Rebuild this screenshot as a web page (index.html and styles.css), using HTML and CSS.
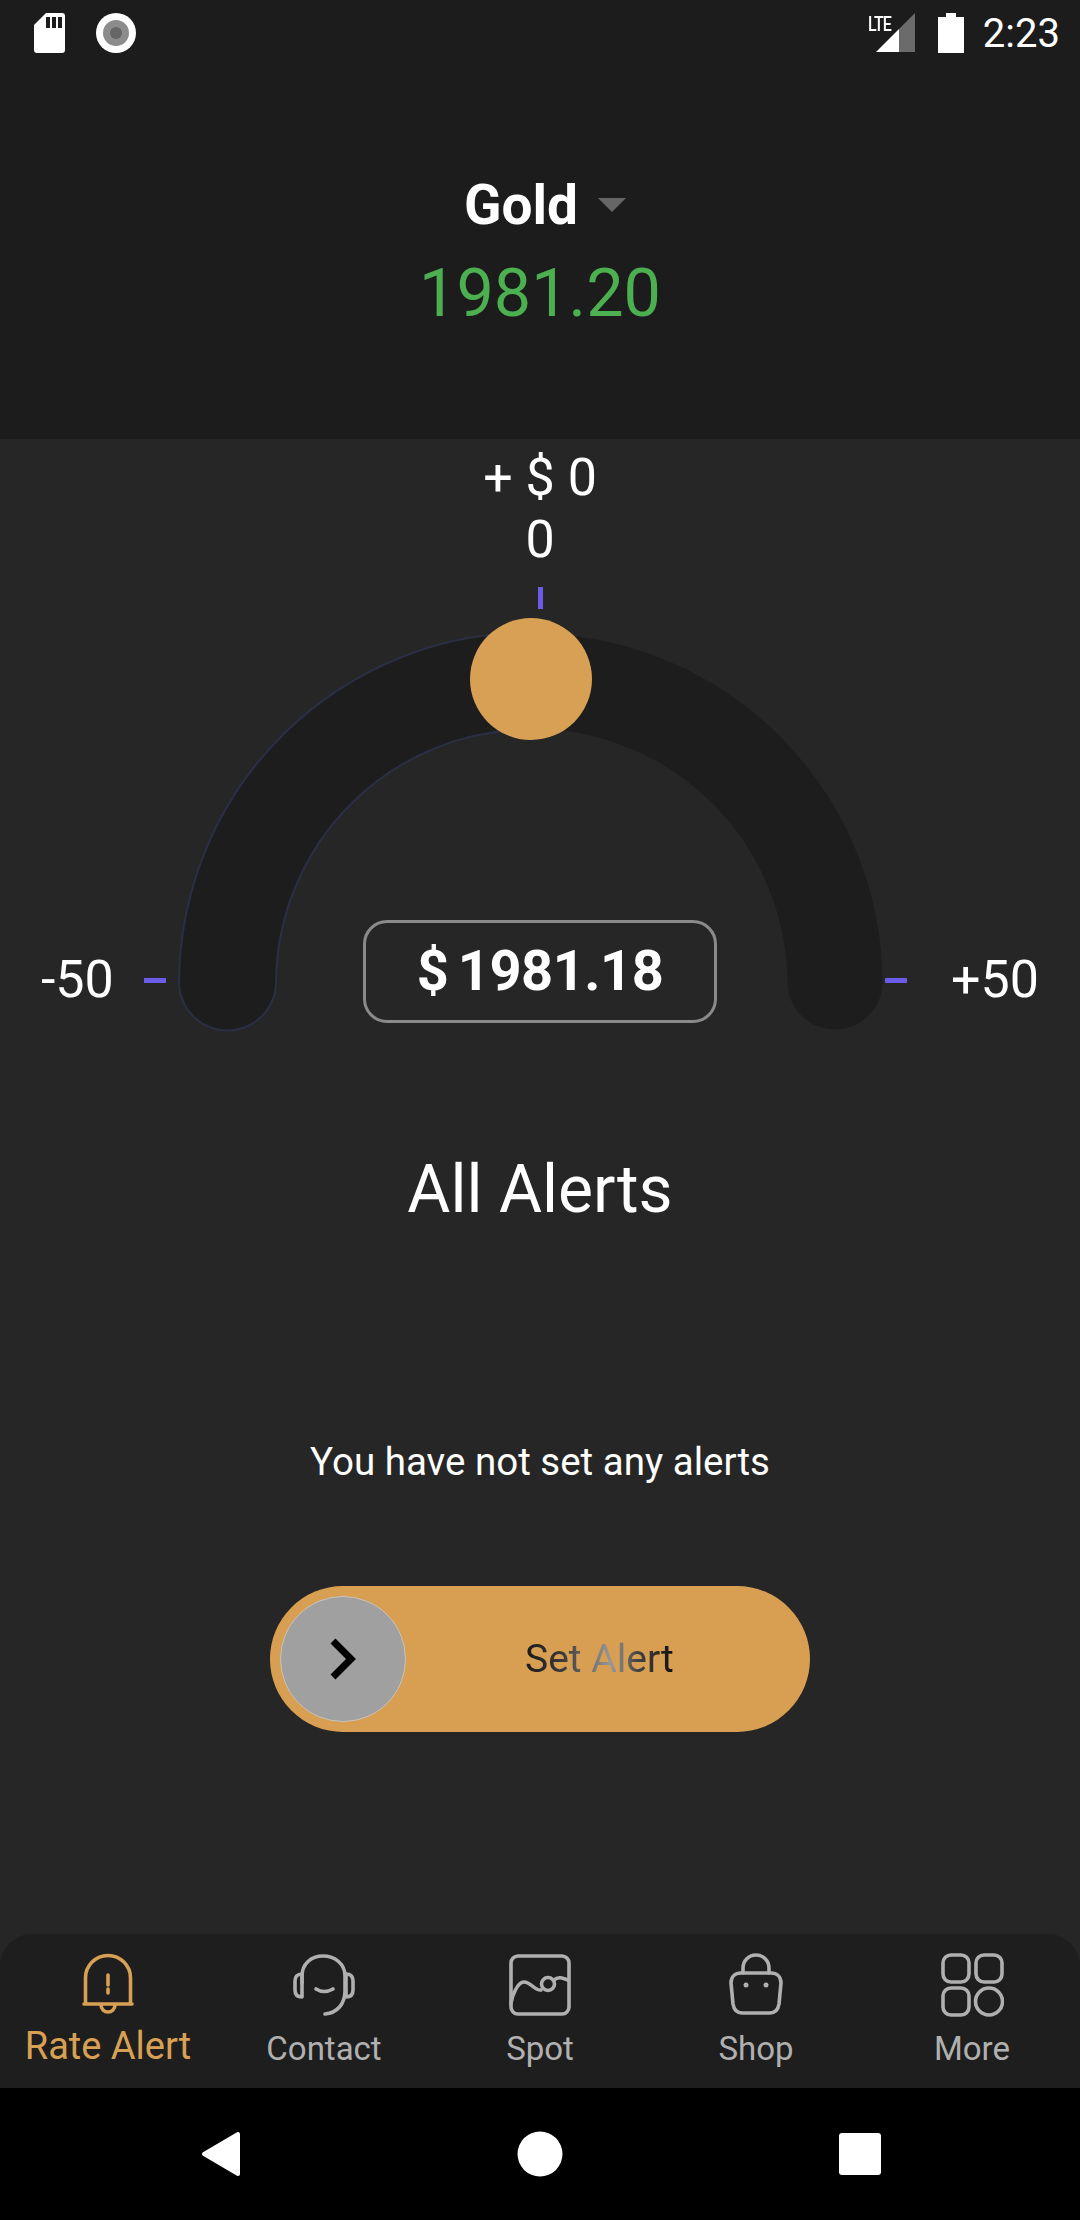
FILE: index.html
```html
<!DOCTYPE html>
<html lang="en">
  <head>
    <meta charset="UTF-8" />
    <meta name="viewport" content="width=device-width, initial-scale=1.0" />
    <title>Rate Alert</title>
    <link rel="stylesheet" href="styles.css">
  </head>
  <body>
    <div class="app">
      <header class="top">
        <div class="status">
          <div class="status_left">
            <svg width="31" height="40" viewBox="0 0 31 40">
              <path fill="#fff" d="M12 0H28a3 3 0 0 1 3 3V37a3 3 0 0 1-3 3H3a3 3 0 0 1-3-3V12Z" />
              <path fill="#1c1c1c" d="M12 4h4v11h-4zM18 4h4v11h-4zM24 4h4v11h-4z" />
            </svg>
            <svg width="40" height="40" viewBox="0 0 40 40">
              <circle cx="20" cy="20" r="20" fill="#fff" />
              <circle cx="20" cy="20" r="13" fill="#8c8c8c" />
              <circle cx="20" cy="20" r="6" fill="#666" />
            </svg>
          </div>
          <div class="status_right">
            <span class="lte">LTE</span>
            <svg class="signal" width="39" height="39" viewBox="0 0 39 39">
              <path fill="#6b6b6b" d="M39 0V39H23V16Z" />
              <path fill="#fff" d="M23 16V39H0Z" />
            </svg>
            <svg class="battery" width="26" height="40" viewBox="0 0 26 40">
              <path fill="#fff" d="M8 0H18V4H26V40H0V4H8Z" />
            </svg>
            <span class="time">2:23</span>
          </div>
        </div>
        <div class="market">
          <div class="market_name">
            Gold
            <svg width="28" height="14" viewBox="0 0 28 14"><path fill="#666" d="M0 0H28L14 14Z" /></svg>
          </div>
          <div class="market_price">1981.20</div>
        </div>
      </header>

      <main class="content">
        <div class="delta">+ $ 0</div>
        <div class="delta">0</div>
        <div class="tick_top"></div>

        <div class="dial">
          <svg class="dial_arc" width="1080" height="430" viewBox="0 0 1080 430">
            <path d="M227.5 373A303.5 303.5 0 0 1 531 72" fill="none" stroke="#2b2f45" stroke-width="99" stroke-linecap="round" />
            <path d="M227.5 373A303.5 303.5 0 0 1 531 72A303.5 303.5 0 0 1 835 373" fill="none" stroke="#1d1d1d" stroke-width="95" stroke-linecap="round" />
            <circle cx="531" cy="70" r="61" fill="#d8a054" />
          </svg>
          <div class="dial_row">
            <div class="dial_side">
              <span class="dial_label">-50</span>
              <span class="tick_side"></span>
            </div>
            <div class="dial_value">$ 1981.18</div>
            <div class="dial_side dial_side_right">
              <span class="tick_side"></span>
              <span class="dial_label">+50</span>
            </div>
          </div>
        </div>

        <h1 class="alerts_title">All Alerts</h1>
        <p class="alerts_empty">You have not set any alerts</p>

        <div class="slide">
          <div class="slide_knob">
            <svg width="26" height="42" viewBox="0 0 26 42">
              <path d="M3 3L21 21L3 39" fill="none" stroke="#000" stroke-width="7" />
            </svg>
          </div>
          <span class="slide_text">Set Alert</span>
        </div>
      </main>

      <nav class="tabs">
        <div class="tab tab_active">
          <svg width="64" height="64" viewBox="0 0 64 64">
            <path d="M9.5 51V25a22.5 22.5 0 0 1 45 0V51M8 51H56M25 52a7 7 0 0 0 14 0M32 22V32M32 36V40" />
          </svg>
          <span>Rate Alert</span>
        </div>
        <div class="tab">
          <svg width="64" height="64" viewBox="0 0 64 64">
            <path d="M10 30V23C10 11 19 3 31 3S53 11 53 23V38C53 51 45 60 33 61" />
            <path d="M10 21C5 21 3 24 3 28V37C3 41 5 44 10 44ZM54 21C59 21 61 24 61 28V37C61 41 59 44 54 44Z" />
            <path d="M24 36Q32 41 41 36" />
          </svg>
          <span>Contact</span>
        </div>
        <div class="tab">
          <svg width="64" height="64" viewBox="0 0 64 64">
            <rect x="3" y="3" width="58" height="58" rx="7" />
            <path d="M3 50C4 44 9 29 16 29C23 29 27 38 33 37M46 27C50 23 55 25 60 27" />
            <circle cx="40" cy="31" r="6.5" />
          </svg>
          <span>Spot</span>
        </div>
        <div class="tab">
          <svg width="64" height="64" viewBox="0 0 64 64">
            <path d="M19 20V15a13 13 0 0 1 26 0V20" />
            <path d="M17 20H47C53 20 57 24 57 30L55 51C54 57 51 60 46 60H18C13 60 10 57 9 51L7 30C7 24 11 20 17 20Z" />
            <circle class="dot" cx="22" cy="32" r="2.5" />
            <circle class="dot" cx="42" cy="32" r="2.5" />
          </svg>
          <span>Shop</span>
        </div>
        <div class="tab">
          <svg width="64" height="64" viewBox="0 0 64 64">
            <rect x="3" y="2" width="26" height="27" rx="8" />
            <rect x="36" y="2" width="26" height="27" rx="8" />
            <rect x="3" y="35" width="26" height="27" rx="8" />
            <circle cx="49" cy="48.5" r="13.5" />
          </svg>
          <span>More</span>
        </div>
      </nav>

      <div class="system">
        <svg width="40" height="46" viewBox="0 0 40 46"><path fill="#fff" stroke="#fff" stroke-width="4" stroke-linejoin="round" d="M3 23L37 3V43Z" /></svg>
        <svg width="46" height="46" viewBox="0 0 46 46"><circle cx="23" cy="23" r="22.5" fill="#fff" /></svg>
        <svg width="42" height="42" viewBox="0 0 42 42"><rect width="42" height="42" rx="3" fill="#fff" /></svg>
      </div>
    </div>
  </body>
</html>
```

FILE: styles.css
```css
* {
  margin: 0;
  padding: 0;
  box-sizing: border-box;
}

body {
  background: #000;
  font-family: Roboto, "Liberation Sans", sans-serif;
  color: #fff;
}

.app {
  width: 1080px;
  height: 2220px;
  overflow: hidden;
  display: flex;
  flex-direction: column;
  background: #262626;
}

.top {
  height: 439px;
  background: #1c1c1c;
}

.status {
  height: 66px;
  padding: 13px 20px 0 34px;
  display: flex;
  justify-content: space-between;
  align-items: flex-start;
}

.status_left {
  display: flex;
  gap: 31px;
}

.status_right {
  display: flex;
  align-items: flex-start;
  position: relative;
}

.lte {
  position: absolute;
  left: -8px;
  top: 1px;
  font-size: 20px;
  font-weight: 500;
  line-height: 20px;
  letter-spacing: -1px;
  transform: scaleX(0.8);
  transform-origin: left top;
}

.signal {
  margin-right: 23px;
}

.battery {
  margin-right: 19px;
}

.time {
  font-size: 40px;
  line-height: 42px;
}

.market {
  padding-top: 103px;
  text-align: center;
}

.market_name {
  height: 72px;
  display: flex;
  justify-content: center;
  align-items: center;
  gap: 20px;
  padding-left: 10px;
  font-size: 55px;
  font-weight: 700;
  line-height: 72px;
}

.market_price {
  margin-top: 12px;
  font-size: 66.5px;
  line-height: 80px;
  color: #4caf50;
}

.content {
  flex: 1;
  padding-top: 8px;
  display: flex;
  flex-direction: column;
  align-items: center;
}

.delta {
  height: 62px;
  font-size: 52px;
  line-height: 62px;
}

.tick_top {
  width: 5px;
  height: 22px;
  margin-top: 16px;
  background: #6a5be8;
}

.dial {
  position: relative;
  width: 1080px;
  height: 414px;
  padding-top: 311px;
}

.dial_arc {
  position: absolute;
  left: 0;
  top: 0;
}

.dial_row {
  position: relative;
  display: grid;
  grid-template-columns: 1fr 354px 1fr;
}

.dial_side {
  display: flex;
  align-items: center;
  gap: 30px;
  padding: 17px 0 0 41px;
}

.dial_side_right {
  justify-content: flex-end;
  padding: 17px 41px 0 0;
  gap: 44px;
}

.dial_label {
  font-size: 52px;
  line-height: 70px;
}

.tick_side {
  width: 22px;
  height: 5px;
  background: #6a5be8;
}

.dial_value {
  height: 103px;
  border: 3px solid #8a8a8a;
  border-radius: 24px;
  background: #262626;
  font-size: 56px;
  font-weight: 700;
  line-height: 97px;
  letter-spacing: -0.5px;
  word-spacing: -4px;
  text-align: center;
}

.alerts_title {
  margin-top: 122px;
  font-size: 66px;
  font-weight: 400;
  line-height: 90px;
}

.alerts_empty {
  margin-top: 202px;
  font-size: 38.5px;
  line-height: 50px;
}

.slide {
  width: 540px;
  height: 146px;
  margin-top: 99px;
  padding-left: 10px;
  display: flex;
  align-items: center;
  border-radius: 73px;
  background: #d89f52;
}

.slide_knob {
  width: 126px;
  height: 126px;
  display: grid;
  place-items: center;
  border-radius: 50%;
  border: 1px solid #c9c4ba;
  background: #a0a0a0;
}

.slide_text {
  margin-left: 119px;
  font-size: 39px;
  line-height: 50px;
  background: linear-gradient(90deg, #1a1a1a 0%, #3a3a3a 25%, #999 58%, #444 75%, #111 100%);
  -webkit-background-clip: text;
  background-clip: text;
  color: transparent;
}

.tabs {
  height: 154px;
  display: grid;
  grid-template-columns: repeat(5, 216px);
  border-radius: 32px 32px 0 0;
  background: #1e1e1e;
}

.tab {
  height: 154px;
  padding-top: 19px;
  display: flex;
  flex-direction: column;
  align-items: center;
  color: #b0b0b0;
  font-size: 33px;
}

.tab span {
  height: 50px;
  line-height: 50px;
  margin-top: 7px;
  white-space: nowrap;
}

.tab svg {
  fill: none;
  stroke: currentColor;
  stroke-width: 3.6;
  stroke-linecap: round;
  stroke-linejoin: round;
}

.tab svg .dot {
  fill: currentColor;
  stroke: none;
}

.tab_active {
  color: #d8a054;
  font-size: 38px;
}

.tab_active span {
  margin-top: 4px;
}

.system {
  height: 132px;
  display: grid;
  grid-template-columns: repeat(3, 319.5px);
  justify-items: center;
  align-items: center;
  padding-left: 61px;
  background: #000;
}
```
